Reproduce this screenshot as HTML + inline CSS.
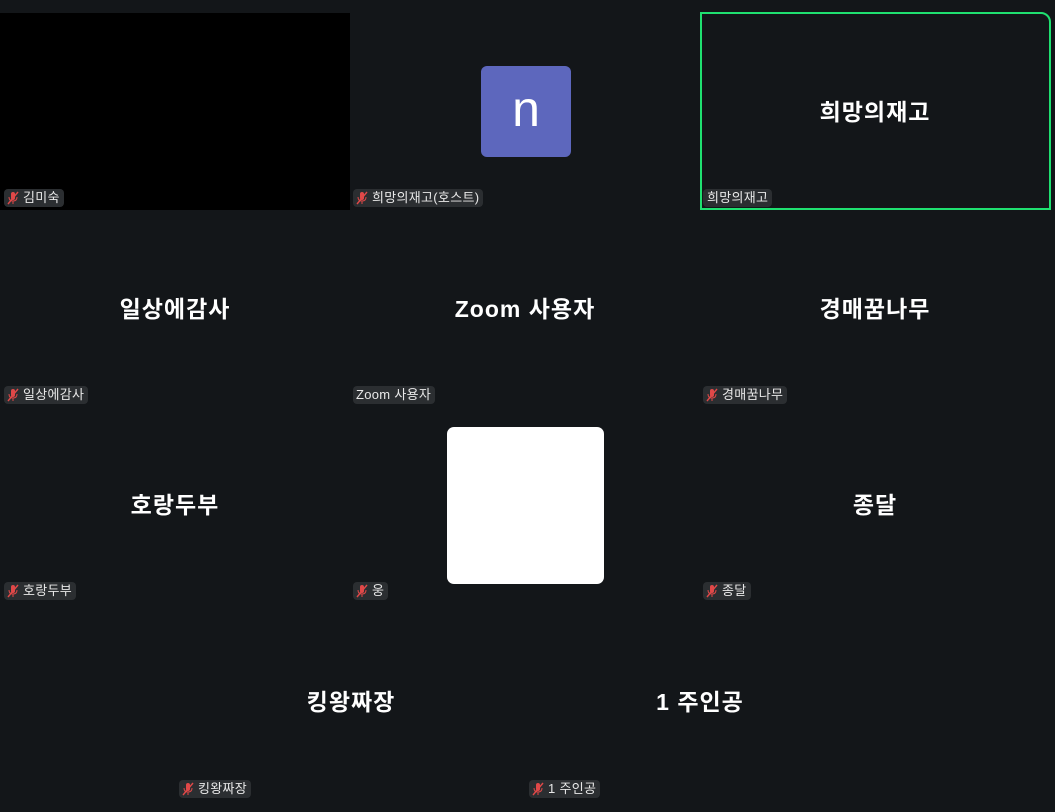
<!DOCTYPE html>
<html><head><meta charset="utf-8"><style>
body{margin:0;width:1055px;height:812px;background:#131619;position:relative;overflow:hidden;font-family:"Liberation Sans","Noto Sans CJK KR",sans-serif;}
.a{position:absolute}
.nm{position:absolute;color:#fff;font-weight:bold;font-size:23px;letter-spacing:1px;transform:translate(-50%,-50%);white-space:nowrap}
.lb{position:absolute;height:18px;background:#2b2e31;border-radius:4px;color:#e8e8e8;font-size:13px;letter-spacing:0.3px;line-height:18px;padding:0 4px 0 3px;white-space:nowrap;display:flex;align-items:center}
.lb svg{margin-right:4px}
</style></head><body>
<div class="a" style="left:0;top:13px;width:350px;height:197px;background:#000"></div>
<div class="a" style="left:481px;top:66px;width:90px;height:91px;background:#5d67bd;border-radius:6px;color:#fff;font-size:50px;text-align:center;line-height:86px">n</div>
<div class="a" style="left:700px;top:12px;width:347px;height:194px;border:2px solid #1fe070;border-top-right-radius:10px;"></div>
<div class="a" style="left:447px;top:427px;width:157px;height:157px;background:#fff;border-radius:7px"></div>

<div class="nm" style="left:875px;top:110px">희망의재고</div>
<div class="nm" style="left:175px;top:307px">일상에감사</div>
<div class="nm" style="left:525px;top:307px">Zoom 사용자</div>
<div class="nm" style="left:875px;top:307px">경매꿈나무</div>
<div class="nm" style="left:175px;top:503px">호랑두부</div>
<div class="nm" style="left:875px;top:503px">종달</div>
<div class="nm" style="left:351px;top:700px">킹왕짜장</div>
<div class="nm" style="left:700px;top:700px">1 주인공</div>

<div class="lb" style="left:4px;top:189px"><svg width="12" height="14" viewBox="0 0 12 14"><rect x="4" y="1" width="4" height="8" rx="2" fill="#e04848"/><path d="M2 6q0 4 4 4q4 0 4-4M6 10v3" stroke="#e04848" fill="none"/><path d="M1 13L11 1" stroke="#e04848" stroke-width="1.4"/></svg>김미숙</div>
<div class="lb" style="left:353px;top:189px"><svg width="12" height="14" viewBox="0 0 12 14"><rect x="4" y="1" width="4" height="8" rx="2" fill="#e04848"/><path d="M2 6q0 4 4 4q4 0 4-4M6 10v3" stroke="#e04848" fill="none"/><path d="M1 13L11 1" stroke="#e04848" stroke-width="1.4"/></svg>희망의재고(호스트)</div>
<div class="lb" style="left:703px;top:189px;padding-left:4px">희망의재고</div>
<div class="lb" style="left:4px;top:386px"><svg width="12" height="14" viewBox="0 0 12 14"><rect x="4" y="1" width="4" height="8" rx="2" fill="#e04848"/><path d="M2 6q0 4 4 4q4 0 4-4M6 10v3" stroke="#e04848" fill="none"/><path d="M1 13L11 1" stroke="#e04848" stroke-width="1.4"/></svg>일상에감사</div>
<div class="lb" style="left:353px;top:386px;padding-left:3px">Zoom 사용자</div>
<div class="lb" style="left:703px;top:386px"><svg width="12" height="14" viewBox="0 0 12 14"><rect x="4" y="1" width="4" height="8" rx="2" fill="#e04848"/><path d="M2 6q0 4 4 4q4 0 4-4M6 10v3" stroke="#e04848" fill="none"/><path d="M1 13L11 1" stroke="#e04848" stroke-width="1.4"/></svg>경매꿈나무</div>
<div class="lb" style="left:4px;top:582px"><svg width="12" height="14" viewBox="0 0 12 14"><rect x="4" y="1" width="4" height="8" rx="2" fill="#e04848"/><path d="M2 6q0 4 4 4q4 0 4-4M6 10v3" stroke="#e04848" fill="none"/><path d="M1 13L11 1" stroke="#e04848" stroke-width="1.4"/></svg>호랑두부</div>
<div class="lb" style="left:353px;top:582px"><svg width="12" height="14" viewBox="0 0 12 14"><rect x="4" y="1" width="4" height="8" rx="2" fill="#e04848"/><path d="M2 6q0 4 4 4q4 0 4-4M6 10v3" stroke="#e04848" fill="none"/><path d="M1 13L11 1" stroke="#e04848" stroke-width="1.4"/></svg>웅</div>
<div class="lb" style="left:703px;top:582px"><svg width="12" height="14" viewBox="0 0 12 14"><rect x="4" y="1" width="4" height="8" rx="2" fill="#e04848"/><path d="M2 6q0 4 4 4q4 0 4-4M6 10v3" stroke="#e04848" fill="none"/><path d="M1 13L11 1" stroke="#e04848" stroke-width="1.4"/></svg>종달</div>
<div class="lb" style="left:179px;top:780px"><svg width="12" height="14" viewBox="0 0 12 14"><rect x="4" y="1" width="4" height="8" rx="2" fill="#e04848"/><path d="M2 6q0 4 4 4q4 0 4-4M6 10v3" stroke="#e04848" fill="none"/><path d="M1 13L11 1" stroke="#e04848" stroke-width="1.4"/></svg>킹왕짜장</div>
<div class="lb" style="left:529px;top:780px"><svg width="12" height="14" viewBox="0 0 12 14"><rect x="4" y="1" width="4" height="8" rx="2" fill="#e04848"/><path d="M2 6q0 4 4 4q4 0 4-4M6 10v3" stroke="#e04848" fill="none"/><path d="M1 13L11 1" stroke="#e04848" stroke-width="1.4"/></svg>1 주인공</div>
</body></html>
